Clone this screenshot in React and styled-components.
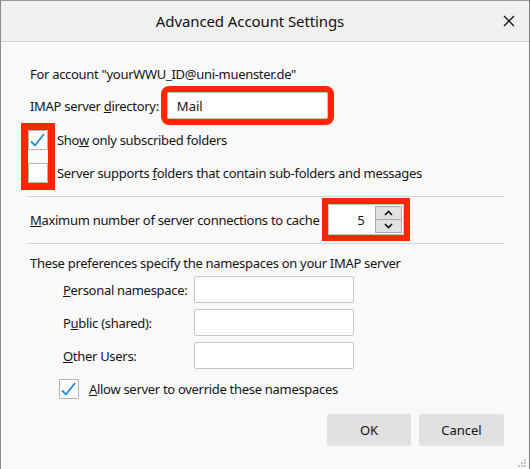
import React from "react";
import styled, { createGlobalStyle } from "styled-components";

const GlobalStyle = createGlobalStyle`
  html, body {
    margin: 0;
    padding: 0;
    background: #f9f9f9;
  }
  body {
    font-family: "Noto Sans", "Open Sans", Arial, sans-serif;
    font-size: 13px;
    color: #141414;
  }
`;

const RED = "#ff2600";

const Window = styled.div`
  position: relative;
  width: 530px;
  height: 469px;
  box-sizing: border-box;
  border-left: 1px solid #8c8c8c;
  border-right: 1px solid #7a7a7a;
  border-top: 1px solid #9a9a9a;
  background: #f9f9f9;
  display: flex;
  flex-direction: column;
  overflow: hidden;
`;

const TitleBar = styled.div`
  height: 40px;
  background: #f0f0f0;
  border-bottom: 1px solid #d3d3d3;
  display: flex;
  align-items: center;
`;

const Title = styled.div`
  flex: 1;
  text-align: center;
  padding-left: 10px;
  font-size: 15px;
  color: #111;
  letter-spacing: -0.1px;
`;

const CloseButton = styled.div`
  width: 40px;
  height: 40px;
  display: flex;
  align-items: center;
  justify-content: center;
`;

const Body = styled.div`
  flex: 1;
  padding: 22px 25px 0 29px;
  display: flex;
  flex-direction: column;
  letter-spacing: -0.3px;
`;

const Line = styled.div`
  height: 20px;
  line-height: 20px;
  margin-top: ${(p) => p.$mt || 0}px;
  white-space: nowrap;
`;

const FieldRow = styled.div`
  display: flex;
  align-items: center;
  margin-top: ${(p) => p.$mt || 0}px;
  white-space: nowrap;
`;

const TextInput = styled.div`
  box-sizing: border-box;
  width: ${(p) => p.$w}px;
  height: 27px;
  background: #fff;
  border: 1px solid #c6c6c6;
  border-radius: 2px;
  padding-left: 9px;
  display: flex;
  align-items: center;
  margin-left: ${(p) => p.$ml || 0}px;
  outline: ${(p) => (p.$mark ? `6px solid ${RED}` : "none")};
  letter-spacing: 0;
`;

const CheckGroup = styled.div`
  display: flex;
  margin-top: ${(p) => p.$mt || 0}px;
  margin-left: -2px;
`;

const CheckColumn = styled.div`
  display: flex;
  flex-direction: column;
  gap: 13px;
  outline: ${(p) => (p.$mark ? `7px solid ${RED}` : "none")};
`;

const LabelColumn = styled.div`
  display: flex;
  flex-direction: column;
  gap: 13px;
  margin-left: 9px;
`;

const CheckLabel = styled.div`
  height: 20px;
  line-height: 20px;
  white-space: nowrap;
`;

const Box = styled.div`
  box-sizing: border-box;
  width: 20px;
  height: 20px;
  border: 1px solid #b4b4b4;
  background: #fdfdfd;
  border-radius: 1px;
  display: flex;
  align-items: center;
  justify-content: center;
`;

const Separator = styled.div`
  height: 1px;
  background: #d6d6d6;
  margin: ${(p) => p.$mt}px 0 0 -3px;
`;

const Spinner = styled.div`
  box-sizing: border-box;
  width: 76px;
  height: 31px;
  margin-left: 8px;
  background: #fff;
  border: 1px solid #c6c6c6;
  display: flex;
  align-items: center;
  justify-content: flex-end;
  padding: 1px;
  outline: 6px solid ${RED};
`;

const SpinValue = styled.div`
  margin-right: 10px;
  letter-spacing: 0;
`;

const SpinButtons = styled.div`
  display: flex;
  flex-direction: column;
  width: 27px;
  height: 27px;
`;

const SpinButton = styled.div`
  flex: 1;
  box-sizing: border-box;
  background: #e1e1e1;
  border: 1px solid #adadad;
  border-top-width: ${(p) => (p.$lower ? 0 : 1)}px;
  display: flex;
  align-items: center;
  justify-content: center;
`;

const NamespaceGrid = styled.div`
  display: grid;
  grid-template-columns: 131px 160px;
  row-gap: 6px;
  margin: 3px 0 0 33px;
  align-items: center;
`;

const AllowRow = styled.div`
  display: flex;
  align-items: center;
  margin: 10px 0 0 29px;
  gap: 10px;
  white-space: nowrap;
`;

const ButtonRow = styled.div`
  display: flex;
  justify-content: flex-end;
  gap: 8px;
  margin-top: 15px;
`;

const Button = styled.div`
  width: ${(p) => p.$w}px;
  height: 32px;
  background: #e1e1e1;
  border-radius: 2px;
  display: flex;
  align-items: center;
  justify-content: center;
  letter-spacing: 0;
`;

const Grip = styled.svg`
  position: absolute;
  right: 2px;
  bottom: 1px;
`;

const Check = () => (
  <svg width="18" height="18" viewBox="0 0 18 18">
    <path d="M2 10.5 L6 14.5 L15 3" fill="none" stroke="#2289d8" strokeWidth="1.8" />
  </svg>
);

const Chevron = ({ down }) => (
  <svg width="9" height="6" viewBox="0 0 9 6">
    <path
      d={down ? "M1 1 L4.5 4.5 L8 1" : "M1 5 L4.5 1.5 L8 5"}
      fill="none"
      stroke="#111"
      strokeWidth="1.6"
    />
  </svg>
);

export default function App() {
  return (
    <>
      <GlobalStyle />
      <Window>
        <TitleBar>
          <Title>Advanced Account Settings</Title>
          <CloseButton>
            <svg width="12" height="12" viewBox="0 0 12 12">
              <path d="M1 1 L11 11 M11 1 L1 11" stroke="#111" strokeWidth="1.3" />
            </svg>
          </CloseButton>
        </TitleBar>
        <Body>
          <Line>For account "yourWWU_ID@uni-muenster.de"</Line>
          <FieldRow $mt={8}>
            <span>
              IMAP server <u>d</u>irectory:
            </span>
            <TextInput $w={161} $ml={8} $mark>
              Mail
            </TextInput>
          </FieldRow>
          <CheckGroup $mt={11}>
            <CheckColumn $mark>
              <Box>
                <Check />
              </Box>
              <Box />
            </CheckColumn>
            <LabelColumn>
              <CheckLabel>
                Sho<u>w</u> only subscribed folders
              </CheckLabel>
              <CheckLabel>
                Server supports <u>f</u>olders that contain sub-folders and messages
              </CheckLabel>
            </LabelColumn>
          </CheckGroup>
          <Separator $mt={13} />
          <FieldRow $mt={7}>
            <span>
              <u>M</u>aximum number of server connections to cache
            </span>
            <Spinner>
              <SpinValue>5</SpinValue>
              <SpinButtons>
                <SpinButton>
                  <Chevron />
                </SpinButton>
                <SpinButton $lower>
                  <Chevron down />
                </SpinButton>
              </SpinButtons>
            </Spinner>
          </FieldRow>
          <Separator $mt={8} />
          <Line $mt={9}>These preferences specify the namespaces on your IMAP server</Line>
          <NamespaceGrid>
            <span>
              <u>P</u>ersonal namespace:
            </span>
            <TextInput $w={160} />
            <span>
              P<u>u</u>blic (shared):
            </span>
            <TextInput $w={160} />
            <span>
              <u>O</u>ther Users:
            </span>
            <TextInput $w={160} />
          </NamespaceGrid>
          <AllowRow>
            <Box>
              <Check />
            </Box>
            <span>
              <u>A</u>llow server to override these namespaces
            </span>
          </AllowRow>
          <ButtonRow>
            <Button $w={84}>OK</Button>
            <Button $w={85}>Cancel</Button>
          </ButtonRow>
        </Body>
        <Grip width="9" height="9" viewBox="0 0 9 9">
          <rect x="6" y="0" width="2" height="2" fill="#c4c4c4" />
          <rect x="3" y="3" width="2" height="2" fill="#c4c4c4" />
          <rect x="6" y="3" width="2" height="2" fill="#c4c4c4" />
          <rect x="0" y="6" width="2" height="2" fill="#c4c4c4" />
          <rect x="3" y="6" width="2" height="2" fill="#c4c4c4" />
          <rect x="6" y="6" width="2" height="2" fill="#c4c4c4" />
        </Grip>
      </Window>
    </>
  );
}
